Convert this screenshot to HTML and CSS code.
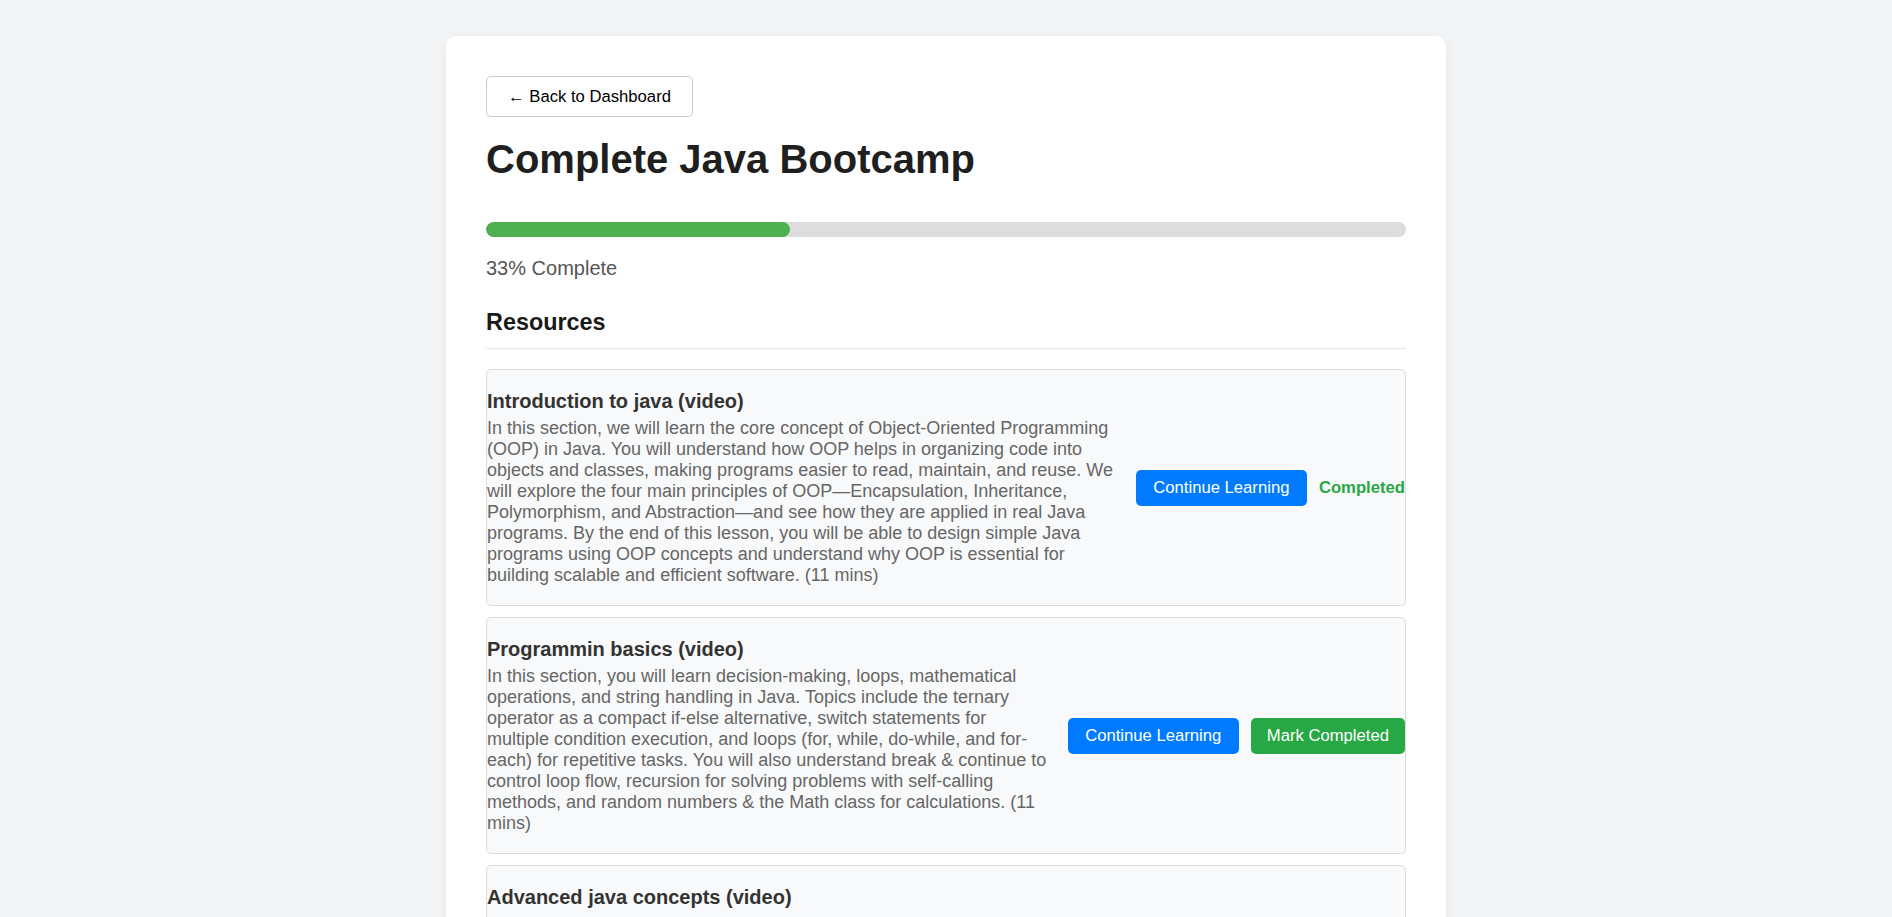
FILE: index.html
```html
<!DOCTYPE html>
<html lang="en">
<head>
<meta charset="utf-8">
<title>Complete Java Bootcamp</title>
<link rel="stylesheet" href="styles.css">
</head>
<body>
<main class="card">
  <button class="back-btn" type="button">← Back to Dashboard</button>
  <h1 class="course-title">Complete Java Bootcamp</h1>
  <div class="progress"><div class="progress-fill" style="width: 33%"></div></div>
  <p class="progress-text">33% Complete</p>
  <h3 class="section-title">Resources</h3>
  <ul class="resources">
    <li class="resource">
      <div class="resource-info">
        <h4 class="resource-title">Introduction to java (video)</h4>
        <p class="resource-desc">In this section, we will learn the core concept of Object-Oriented Programming (OOP) in Java. You will understand how OOP helps in organizing code into objects and classes, making programs easier to read, maintain, and reuse. We will explore the four main principles of OOP—Encapsulation, Inheritance, Polymorphism, and Abstraction—and see how they are applied in real Java programs. By the end of this lesson, you will be able to design simple Java programs using OOP concepts and understand why OOP is essential for building scalable and efficient software. (11 mins)</p>
      </div>
      <div class="resource-actions">
        <button class="btn btn-continue" type="button">Continue Learning</button>
        <span class="done">Completed</span>
      </div>
    </li>
    <li class="resource">
      <div class="resource-info">
        <h4 class="resource-title">Programmin basics (video)</h4>
        <p class="resource-desc">In this section, you will learn decision-making, loops, mathematical operations, and string handling in Java. Topics include the ternary operator as a compact if-else alternative, switch statements for multiple condition execution, and loops (for, while, do-while, and for-each) for repetitive tasks. You will also understand break &amp; continue to control loop flow, recursion for solving problems with self-calling methods, and random numbers &amp; the Math class for calculations. (11 mins)</p>
      </div>
      <div class="resource-actions">
        <button class="btn btn-continue" type="button">Continue Learning</button>
        <button class="btn btn-mark" type="button">Mark Completed</button>
      </div>
    </li>
    <li class="resource">
      <div class="resource-info">
        <h4 class="resource-title">Advanced java concepts (video)</h4>
        <p class="resource-desc">In this section, you will explore advanced Java topics such as collections, generics, exception handling, file I/O, lambda expressions and streams, and multithreading. You will understand how the Collections Framework stores and organizes data, how generics make code type-safe and reusable, and how exceptions help your programs recover from errors gracefully. You will also learn to read and write files, process data with streams, and run tasks concurrently with threads, so that you can build robust, efficient and real-world Java applications. (11 mins)</p>
      </div>
      <div class="resource-actions">
        <button class="btn btn-continue" type="button">Continue Learning</button>
        <button class="btn btn-mark" type="button">Mark Completed</button>
      </div>
    </li>
  </ul>
</main>
</body>
</html>
```
FILE: styles.css
```css
* { box-sizing: border-box; }

html, body {
  margin: 0;
  background: #f3f4f6;
  font-family: "Liberation Sans", Arial, sans-serif;
}

body {
  padding: 36px 0 40px;
}

.card {
  display: block;
  width: 1000px;
  margin: 0 auto;
  background: #ffffff;
  border-radius: 10px;
  padding: 40px;
  box-shadow: 0 3px 12px rgba(0, 0, 0, 0.06);
}

.back-btn {
  display: inline-block;
  font-family: "Liberation Sans", Arial, sans-serif;
  font-size: 16.67px;
  color: #000;
  background: #fff;
  border: 1px solid #cccccc;
  border-radius: 5px;
  padding: 10px 21px;
  line-height: 19px;
  cursor: pointer;
}

.course-title {
  margin: 19px 0 0;
  font-size: 40px;
  line-height: 46px;
  font-weight: 700;
  color: #1f1f1f;
}

.progress {
  margin-top: 40px;
  height: 15px;
  border-radius: 8px;
  background: #dddddd;
  overflow: hidden;
}

.progress-fill {
  height: 100%;
  background: #4caf50;
  border-radius: 8px;
}

.progress-text {
  margin: 20px 0 0;
  font-size: 20px;
  line-height: 23px;
  color: #555555;
}

.section-title {
  margin: 29px 0 0;
  font-size: 23.4px;
  line-height: 27px;
  font-weight: 700;
  color: #1a1a1a;
  padding-bottom: 12px;
  border-bottom: 1px solid #e6e6e6;
}

.resources {
  list-style: none;
  margin: 20px 0 0;
  padding: 0;
  display: flex;
  flex-direction: column;
  gap: 11px;
}

.resource {
  display: flex;
  align-items: center;
  gap: 20px;
  padding: 20px 0 19px;
  background: #f8f9fa;
  border: 1px solid #dddddd;
  border-radius: 5px;
}

.resource-info {
  flex: 1;
  min-width: 0;
}

.resource-title {
  margin: 0;
  font-size: 20px;
  line-height: 23px;
  font-weight: 700;
  color: #333333;
}

.resource-desc {
  margin: 5px 0 0;
  font-size: 18px;
  line-height: 21px;
  color: #666666;
}

.resource-actions {
  flex-shrink: 0;
  display: flex;
  align-items: center;
  gap: 12px;
}

.btn {
  font-family: "Liberation Sans", Arial, sans-serif;
  font-size: 16.67px;
  line-height: 19.2px;
  color: #ffffff;
  border: none;
  border-radius: 5px;
  cursor: pointer;
}

.btn-continue {
  background: #007bff;
  padding: 8.75px 17.5px;
}

.btn-mark {
  background: #28a745;
  padding: 8px 16px;
}

.done {
  font-size: 16.67px;
  font-weight: 700;
  color: #28a745;
}
```
